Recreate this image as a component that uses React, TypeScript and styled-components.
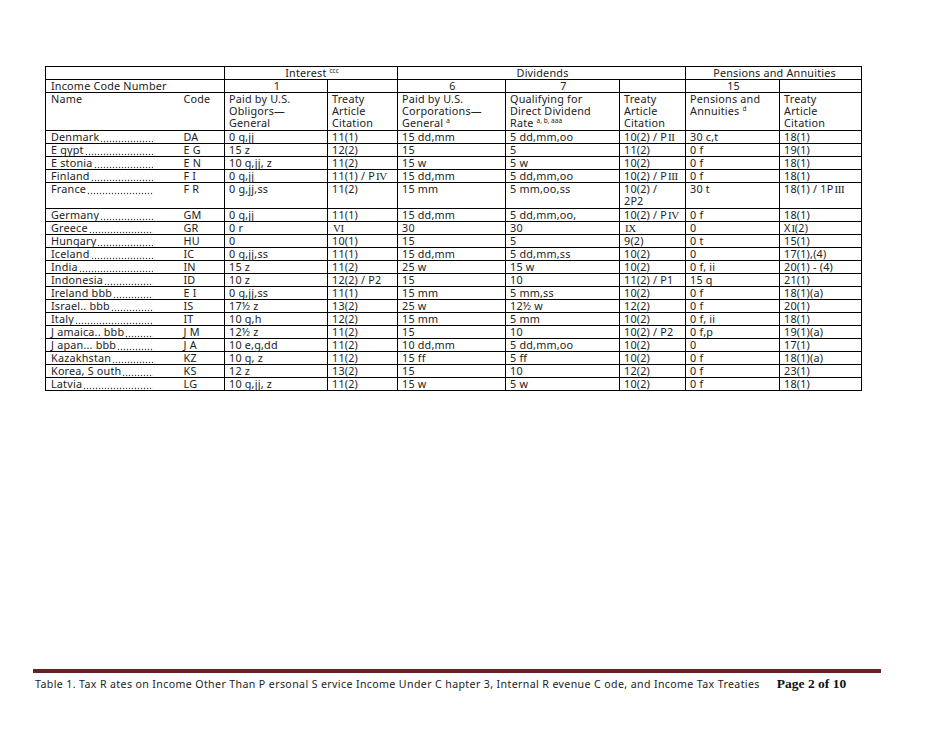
import * as React from 'react';
import styled, { createGlobalStyle } from 'styled-components';

const GlobalStyle = createGlobalStyle`
    html, body {
        margin: 0;
        padding: 0;
        background: #fff;
    }
    body {
        font-family: "Noto Sans", "Open Sans", sans-serif;
        color: #222;
    }
`;

const Page = styled.div`
    width: 950px;
    height: 735px;
    box-sizing: border-box;
    padding: 66px 69px 0 33px;
    display: flex;
    flex-direction: column;
`;

const Table = styled.table`
    margin-left: 12px;
    width: 816px;
    border-collapse: collapse;
    table-layout: fixed;
    font-size: 10.8px;
    line-height: 12px;
    letter-spacing: 0.2px;
`;

const Cell = styled.td<{ $center?: boolean; $noLeft?: boolean; $noRight?: boolean; $pad?: number }>`
    border: 1px solid #000;
    ${p => p.$noLeft && 'border-left: none;'}
    ${p => p.$noRight && 'border-right: none;'}
    padding: 0 2px 0 ${p => p.$pad ?? 4}px;
    text-align: ${p => (p.$center ? 'center' : 'left')};
    vertical-align: top;
    white-space: nowrap;
    font-weight: normal;
`;

const HeadCell = styled(Cell)`
    white-space: normal;
    padding-bottom: 1px;
`;

const Sup = styled.sup`
    font-size: 6.5px;
    line-height: 0;
    vertical-align: 4px;
    margin-left: 3px;
    letter-spacing: 0;
`;

/* roman numerals in the source are set in a serif face */
const Roman = styled.span`
    font-family: "Liberation Serif", "Times New Roman", serif;
    font-size: 11px;
    letter-spacing: -0.4px;
    margin-left: 1px;
`;

const NameBox = styled.div`
    display: flex;
    align-items: flex-end;
    width: 102px;
    white-space: nowrap;
`;

/* dot leader drawn as a dotted background, like the printed "......." */
const Dots = styled.span`
    flex: 1;
    height: 10px;
    margin-left: 1px;
    background-image: radial-gradient(circle, #444 0.65px, transparent 1.05px);
    background-size: 3px 3px;
    background-repeat: repeat-x;
    background-position: left bottom;
`;

const Footer = styled.footer`
    margin-top: auto;
    margin-bottom: 43px;
    width: 848px;
    border-top: 4px solid #632423;
    padding-top: 3px;
    display: flex;
    align-items: baseline;
    gap: 17px;
    font-size: 10.6px;
    color: #222;
`;

const FooterTitle = styled.span`
    padding-left: 2px;
    letter-spacing: 0.38px;
`;

const PageNo = styled.span`
    font-family: "Liberation Serif", "Times New Roman", serif;
    font-weight: bold;
    font-size: 13.5px;
    color: #111;
`;

type Row = [string, string, string, string, string, string, string, string, string];

// {…} marks roman numerals
const rows: Row[] = [
    ['Denmark', 'DA', '0 g,jj', '11(1)', '15 dd,mm', '5 dd,mm,oo', '10(2) / P{II}', '30 c,t', '18(1)'],
    ['E gypt', 'E G', '15 z', '12(2)', '15', '5', '11(2)', '0 f', '19(1)'],
    ['E stonia', 'E N', '10 g,jj, z', '11(2)', '15 w', '5 w', '10(2)', '0 f', '18(1)'],
    ['Finland', 'F I', '0 g,jj', '11(1) / P{IV}', '15 dd,mm', '5 dd,mm,oo', '10(2) / P{III}', '0 f', '18(1)'],
    ['France', 'F R', '0 g,jj,ss', '11(2)', '15 mm', '5 mm,oo,ss', '10(2) / 2P2', '30 t', '18(1) / 1P{III}'],
    ['Germany', 'GM', '0 g,jj', '11(1)', '15 dd,mm', '5 dd,mm,oo,', '10(2) / P{IV}', '0 f', '18(1)'],
    ['Greece', 'GR', '0 r', '{VI}', '30', '30', '{IX}', '0', 'X{I}(2)'],
    ['Hungary', 'HU', '0', '10(1)', '15', '5', '9(2)', '0 t', '15(1)'],
    ['Iceland', 'IC', '0 g,jj,ss', '11(1)', '15 dd,mm', '5 dd,mm,ss', '10(2)', '0', '17(1),(4)'],
    ['India', 'IN', '15 z', '11(2)', '25 w', '15 w', '10(2)', '0 f, ii', '20(1) - (4)'],
    ['Indonesia', 'ID', '10 z', '12(2) / P2', '15', '10', '11(2) / P1', '15 q', '21(1)'],
    ['Ireland  bbb', 'E I', '0 g,jj,ss', '11(1)', '15 mm', '5 mm,ss', '10(2)', '0 f', '18(1)(a)'],
    ['Israel.. bbb', 'IS', '17½ z', '13(2)', '25 w', '12½ w', '12(2)', '0 f', '20(1)'],
    ['Italy ', 'IT', '10 g,h', '12(2)', '15 mm', '5 mm', '10(2)', '0 f, ii', '18(1)'],
    ['J amaica.. bbb', 'J M', '12½ z', '11(2)', '15', '10', '10(2) / P2', '0 f,p', '19(1)(a)'],
    ['J apan... bbb', 'J A', '10 e,g,dd', '11(2)', '10 dd,mm', '5 dd,mm,oo', '10(2)', '0', '17(1)'],
    ['Kazakhstan', 'KZ', '10 g, z', '11(2)', '15 ff', '5 ff', '10(2)', '0 f', '18(1)(a)'],
    ['Korea, S outh', 'KS', '12 z', '13(2)', '15', '10', '12(2)', '0 f', '23(1)'],
    ['Latvia', 'LG', '10 g,jj, z', '11(2)', '15 w', '5 w', '10(2)', '0 f', '18(1)'],
];

const Value: React.FC<{ text: string }> = ({ text }) => (
    <>
        {text.split(/\{(.+?)\}/).map((part, i) =>
            i % 2 ? <Roman key={i}>{part}</Roman> : part
        )}
    </>
);

const DataRow: React.FC<{ row: Row }> = ({ row }) => {
    const [name, code, ...rest] = row;
    return (
        <tr>
            <Cell $noRight $pad={5}>
                <NameBox>
                    <span>{name}</span>
                    <Dots />
                </NameBox>
            </Cell>
            <Cell $noLeft $pad={3}>{code}</Cell>
            {rest.map((v, i) =>
                v === '10(2) / 2P2' ? (
                    <HeadCell key={i}>10(2) /<br />2P2</HeadCell>
                ) : (
                    <Cell key={i}><Value text={v} /></Cell>
                )
            )}
        </tr>
    );
};

export default function App() {
    return (
        <>
            <GlobalStyle />
            <Page>
                <Table>
                    <colgroup>
                        <col style={{ width: 135 }} />
                        <col style={{ width: 44 }} />
                        <col style={{ width: 103 }} />
                        <col style={{ width: 70 }} />
                        <col style={{ width: 108 }} />
                        <col style={{ width: 114 }} />
                        <col style={{ width: 66 }} />
                        <col style={{ width: 94 }} />
                        <col style={{ width: 82 }} />
                    </colgroup>
                    <thead>
                        <tr>
                            <Cell colSpan={2} />
                            <Cell as="th" colSpan={2} $center>Interest<Sup>ccc</Sup></Cell>
                            <Cell as="th" colSpan={3} $center>Dividends</Cell>
                            <Cell as="th" colSpan={2} $center>Pensions and Annuities</Cell>
                        </tr>
                        <tr>
                            <Cell colSpan={2} $pad={5}>Income Code Number</Cell>
                            <Cell $center>1</Cell>
                            <Cell />
                            <Cell $center>6</Cell>
                            <Cell $center>7</Cell>
                            <Cell />
                            <Cell $center>15</Cell>
                            <Cell />
                        </tr>
                        <tr>
                            <HeadCell $noRight $pad={5}>Name</HeadCell>
                            <HeadCell $noLeft $pad={3}>Code</HeadCell>
                            <HeadCell>Paid by U.S.<br />Obligors—<br />General</HeadCell>
                            <HeadCell>Treaty<br />Article<br />Citation</HeadCell>
                            <HeadCell>Paid by U.S.<br />Corporations—<br />General<Sup>a</Sup></HeadCell>
                            <HeadCell>Qualifying for<br />Direct Dividend<br />Rate<Sup>a, b, aaa</Sup></HeadCell>
                            <HeadCell>Treaty<br />Article<br />Citation</HeadCell>
                            <HeadCell>Pensions and<br />Annuities<Sup>d</Sup></HeadCell>
                            <HeadCell>Treaty<br />Article<br />Citation</HeadCell>
                        </tr>
                    </thead>
                    <tbody>
                        {rows.map(r => (
                            <DataRow key={r[0]} row={r} />
                        ))}
                    </tbody>
                </Table>
                <Footer>
                    <FooterTitle>
                        Table 1. Tax R ates on Income Other Than P ersonal S ervice Income Under C hapter 3, Internal R evenue C ode, and Income Tax Treaties
                    </FooterTitle>
                    <PageNo>Page 2 of 10</PageNo>
                </Footer>
            </Page>
        </>
    );
}
